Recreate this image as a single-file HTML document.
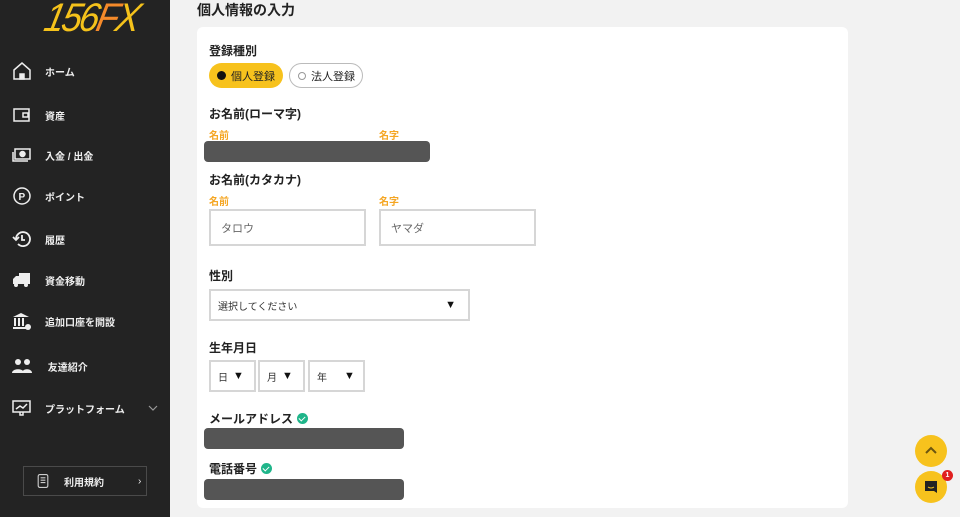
<!DOCTYPE html>
<html><head><meta charset="utf-8"><style>
*{box-sizing:border-box;margin:0;padding:0}
body{width:960px;height:517px;overflow:hidden;background:#f2f2f2;font-family:"Liberation Sans","Noto Sans CJK JP",sans-serif;position:relative;color:#222}
.sb{position:absolute;left:0;top:0;width:170px;height:517px;background:#232323}
.logo{position:absolute;left:40px;top:-2px;font-size:40px;font-weight:normal;font-style:italic;color:#f5c21b;letter-spacing:-3px;line-height:40px;transform:skewX(-12deg) scaleX(0.9)}
.logo span{color:#f58a2a}
.it{position:absolute;left:12px;color:#eee;font-size:10px;font-weight:bold;display:flex;align-items:center}
.it svg{width:20px;height:20px;margin-right:13px}
.abs{position:absolute}
.card{position:absolute;left:197px;top:27px;width:651px;height:481px;background:#fff;border-radius:6px}
.lb{position:absolute;font-size:12px;font-weight:bold;color:#222}
.ol{position:absolute;font-size:10px;font-weight:bold;color:#f5a623}
.inp{position:absolute;border:2px solid #d6d6d6;background:#fff;font-size:11px;color:#666;display:flex;align-items:center;padding-left:10px}
.gr{position:absolute;background:#555;border-radius:4px}
.chk{display:inline-block;width:11px;height:11px;border-radius:50%;background:#1fb58a;vertical-align:-1px;margin-left:4px;position:relative}
.chk:after{content:"";position:absolute;left:3px;top:2px;width:3px;height:5px;border:solid #fff;border-width:0 1.5px 1.5px 0;transform:rotate(45deg)}
</style></head><body>
<div class="sb">
<div class="logo">156<span>F</span>X</div>
<div class="it" style="top:61px"><svg viewBox="0 0 20 20" fill="none" stroke="#eee" stroke-width="1.5"><path d="M2 9L10 2l8 7v9H2z"/><rect x="8" y="13" width="4" height="5" fill="#eee"/></svg>ホーム</div>
<div class="it" style="top:105px"><svg viewBox="0 0 20 20" fill="none" stroke="#eee" stroke-width="1.5"><rect x="2" y="4" width="15" height="12"/><rect x="11" y="8" width="5" height="4"/></svg>資産</div>
<div class="it" style="top:145px"><svg viewBox="0 0 20 20" fill="none" stroke="#eee" stroke-width="1.5"><rect x="3" y="4" width="15" height="10"/><circle cx="10.5" cy="9" r="2.5" fill="#eee"/><path d="M1 7v9h15"/></svg>入金 / 出金</div>
<div class="it" style="top:186px"><svg viewBox="0 0 20 20" fill="none" stroke="#eee" stroke-width="1.5"><circle cx="10" cy="10" r="8"/><text x="6.5" y="14" font-size="10" fill="#eee" stroke="none" font-family="Liberation Sans">P</text></svg>ポイント</div>
<div class="it" style="top:229px"><svg viewBox="0 0 20 20" fill="none" stroke="#eee" stroke-width="1.8"><path d="M4 10a7 7 0 1 1 2 5"/><path d="M1 8l3 3 3-3"/><path d="M10 6v5h3"/></svg>履歴</div>
<div class="it" style="top:270px"><svg viewBox="0 0 20 20" fill="#eee"><rect x="7" y="3" width="11" height="11"/><path d="M1 9l3-3h3v8H1z"/><circle cx="4" cy="15" r="2"/><circle cx="14" cy="15" r="2"/></svg>資金移動</div>
<div class="it" style="top:311px"><svg viewBox="0 0 20 20" fill="#eee"><path d="M1 6l8-4 8 4z"/><rect x="2" y="7" width="2" height="8"/><rect x="6" y="7" width="2" height="8"/><rect x="10" y="7" width="2" height="8"/><rect x="1" y="16" width="13" height="2"/><circle cx="16" cy="16" r="3"/></svg>追加口座を開設</div>
<div class="it" style="top:356px"><svg viewBox="0 0 20 20" fill="#eee"><circle cx="6" cy="6" r="3"/><circle cx="15" cy="6" r="3"/><path d="M0 17c0-5 12-5 12 0z"/><path d="M10 17c0-5 10-5 10 0z"/></svg>&nbsp;友達紹介</div>
<div class="it" style="top:398px"><svg viewBox="0 0 20 20" fill="none" stroke="#eee" stroke-width="1.5"><rect x="1" y="3" width="17" height="11"/><path d="M4 11l4-3 3 2 4-4"/><path d="M8 14v3h3v-3"/></svg>プラットフォーム</div>
<svg class="abs" style="left:148px;top:404px" width="10" height="8" viewBox="0 0 10 8" fill="none" stroke="#999" stroke-width="1.2"><path d="M1 2l4 4 4-4"/></svg>
<div class="abs" style="left:23px;top:466px;width:124px;height:30px;border:1px solid #4a4a4a;color:#eee;font-size:10px;font-weight:bold;display:flex;align-items:center">
<svg viewBox="0 0 20 20" width="16" height="18" style="margin-left:11px;margin-right:13px" fill="none" stroke="#ccc" stroke-width="1.4"><rect x="4" y="2" width="12" height="16" rx="2"/><path d="M7 6h6M7 9h6M7 12h6"/></svg>利用規約<span style="margin-left:34px;font-weight:normal">›</span></div>
</div>
<div class="abs" style="left:197px;top:0;font-size:14px;font-weight:bold">個人情報の入力</div>
<div class="card"></div>
<div class="lb" style="left:209px;top:42px">登録種別</div>
<div class="abs" style="left:209px;top:63px;width:74px;height:25px;border-radius:13px;background:#f7c21d;font-size:11px;display:flex;align-items:center;padding-left:8px"><span style="width:9px;height:9px;border-radius:50%;background:#111;margin-right:5px"></span>個人登録</div>
<div class="abs" style="left:289px;top:63px;width:74px;height:25px;border-radius:13px;border:1px solid #bbb;font-size:11px;display:flex;align-items:center;padding-left:8px"><span style="width:8px;height:8px;border-radius:50%;border:1px solid #999;margin-right:5px"></span>法人登録</div>
<div class="lb" style="left:209px;top:105px">お名前(ローマ字)</div>
<div class="ol" style="left:209px;top:127px">名前</div>
<div class="ol" style="left:379px;top:127px">名字</div>
<div class="gr" style="left:204px;top:141px;width:226px;height:21px"></div>
<div class="lb" style="left:209px;top:171px">お名前(カタカナ)</div>
<div class="ol" style="left:209px;top:193px">名前</div>
<div class="ol" style="left:379px;top:193px">名字</div>
<div class="inp" style="left:209px;top:209px;width:157px;height:37px">タロウ</div>
<div class="inp" style="left:379px;top:209px;width:157px;height:37px">ヤマダ</div>
<div class="lb" style="left:209px;top:267px">性別</div>
<div class="inp" style="left:209px;top:289px;width:261px;height:32px;color:#333;font-size:10px;padding-left:7px">選択してください<span style="position:absolute;right:12px;font-size:11px;color:#111">▼</span></div>
<div class="lb" style="left:209px;top:339px">生年月日</div>
<div class="inp" style="left:209px;top:360px;width:47px;height:32px;color:#333;font-size:10px;padding-left:7px">日 <span style="margin-left:5px;color:#111;font-size:11px">▼</span></div>
<div class="inp" style="left:258px;top:360px;width:47px;height:32px;color:#333;font-size:10px;padding-left:7px">月 <span style="margin-left:5px;color:#111;font-size:11px">▼</span></div>
<div class="inp" style="left:308px;top:360px;width:57px;height:32px;color:#333;font-size:10px;padding-left:7px">年 <span style="margin-left:17px;color:#111;font-size:11px">▼</span></div>
<div class="lb" style="left:209px;top:410px">メールアドレス<span class="chk"></span></div>
<div class="gr" style="left:204px;top:428px;width:200px;height:21px"></div>
<div class="lb" style="left:209px;top:460px">電話番号<span class="chk"></span></div>
<div class="gr" style="left:204px;top:479px;width:200px;height:21px"></div>
<div class="abs" style="left:915px;top:435px;width:32px;height:32px;border-radius:50%;background:#f7c21d"><svg viewBox="0 0 32 32" width="32" height="32" fill="none" stroke="#6b5510" stroke-width="2"><path d="M11 18l5-5 5 5"/></svg></div>
<div class="abs" style="left:915px;top:471px;width:32px;height:32px;border-radius:50%;background:#f7c21d"><svg viewBox="0 0 32 32" width="32" height="32"><path d="M10 10h12v12l-3-2h-9z" fill="#222"/><path d="M13 16q3 2 6 0" stroke="#f7c21d" stroke-width="1" fill="none"/></svg></div>
<div class="abs" style="left:942px;top:470px;width:11px;height:11px;border-radius:50%;background:#e02020;color:#fff;font-size:7px;font-weight:bold;text-align:center;line-height:11px">1</div>
</body></html>
